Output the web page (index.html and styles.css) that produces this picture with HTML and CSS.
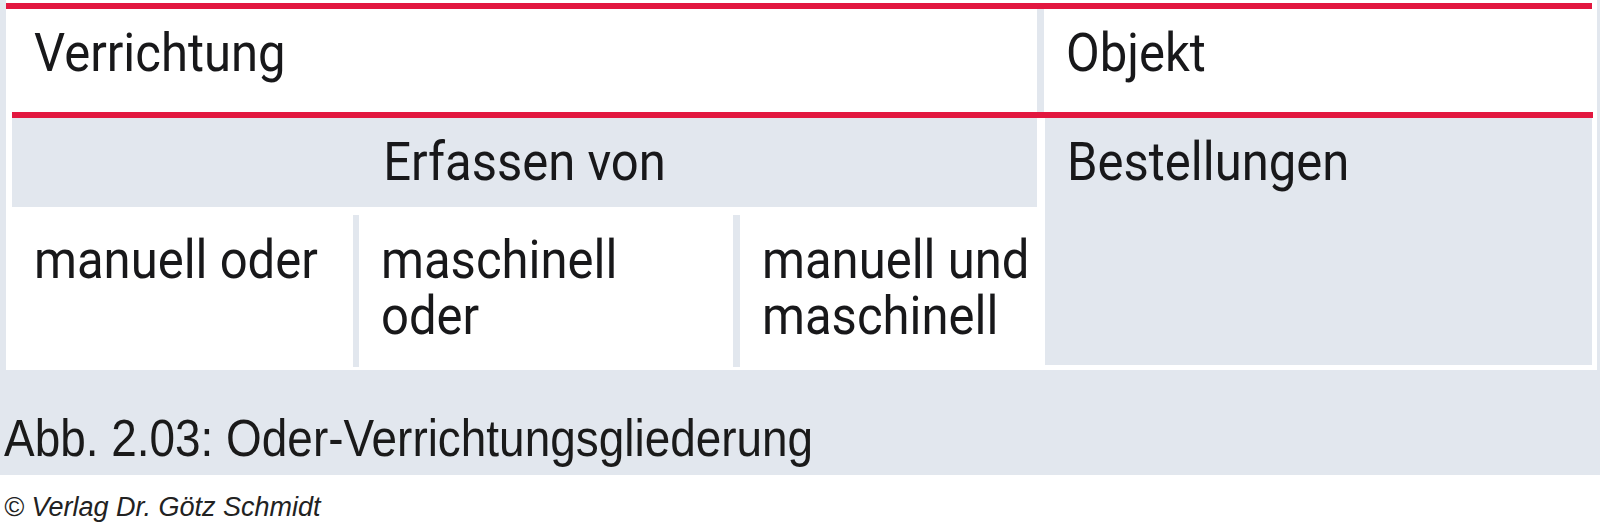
FILE: index.html
```html
<!DOCTYPE html>
<html lang="de">
<head>
<meta charset="utf-8">
<title>Abb. 2.03: Oder-Verrichtungsgliederung</title>
<link rel="stylesheet" href="styles.css">
</head>
<body>
<div class="figure">
  <div class="table">
    <div class="head">
      <div class="hcell hleft"><span class="t">Verrichtung</span></div>
      <div class="hcell hright"><span class="t">Objekt</span></div>
    </div>
    <div class="rule"></div>
    <div class="body">
      <div class="bleft">
        <div class="spancell"><span class="t">Erfassen von</span></div>
        <div class="subrow">
          <div class="sub s1"><span class="t">manuell oder</span></div>
          <div class="sub s2"><span class="t">maschinell<br>oder</span></div>
          <div class="sub s3"><span class="t">manuell und<br>maschinell</span></div>
        </div>
      </div>
      <div class="bright"><span class="t">Bestellungen</span></div>
    </div>
  </div>
  <p class="caption"><span class="cap">Abb. 2.03: Oder-Verrichtungsgliederung</span></p>
</div>
<p class="copy">© Verlag Dr. Götz Schmidt</p>
</body>
</html>
```
FILE: styles.css
```css
html, body {
  margin: 0;
  padding: 0;
  background: #ffffff;
}
body {
  font-family: Roboto, "Liberation Sans", sans-serif;
  color: #18181a;
}
.figure {
  background: #e2e7ee;
}
.table {
  background: #ffffff;
  height: 370px;
  box-sizing: border-box;
  margin: 0 3px 0 6px;
  padding-top: 3px;
  display: flex;
  flex-direction: column;
}
.t {
  display: inline-block;
  font-size: 49px;
  font-weight: 400;
  line-height: 51px;
  white-space: nowrap;
  transform: scaleY(1.1);
  transform-origin: left top;
}
.head {
  display: flex;
  gap: 7px;
  background: #e2e7ee;
  border-top: 6px solid #e2173f;
  margin-right: 5px;
  height: 103px;
}
.hcell {
  background: #ffffff;
  box-sizing: border-box;
  padding-top: 16px;
}
.hleft {
  width: 1031px;
  padding-left: 28px;
}
.hright {
  flex: 1;
  padding-left: 22px;
}
.rule {
  height: 6px;
  background: #e2173f;
  margin: 0 4px 0 6px;
}
.body {
  flex: 1;
  display: flex;
  margin-left: 6px;
}
.bleft {
  width: 1025px;
  display: flex;
  flex-direction: column;
}
.spancell {
  height: 89px;
  box-sizing: border-box;
  background: #e2e7ee;
  text-align: center;
  padding-top: 16px;
}
.subrow {
  flex: 1;
  display: flex;
  padding: 8px 0 3px;
}
.sub {
  box-sizing: border-box;
  padding-top: 17px;
  padding-left: 22px;
}
.s1 {
  width: 341px;
}
.s2 {
  width: 380px;
  border-left: 6px solid #e2e7ee;
}
.s3 {
  width: 304px;
  border-left: 7px solid #e2e7ee;
}
.bright {
  margin-left: 8px;
  width: 547px;
  height: 247px;
  box-sizing: border-box;
  background: #e2e7ee;
  padding: 16px 0 0 22px;
}
.caption {
  margin: 0;
  height: 105px;
  box-sizing: border-box;
  padding: 38px 0 0 4px;
  font-family: "Liberation Sans", Arial, sans-serif;
  font-size: 52px;
  line-height: 60px;
  color: #1a1a1a;
}
.cap {
  display: inline-block;
  white-space: nowrap;
  transform: scaleX(0.883);
  transform-origin: left top;
}
.copy {
  margin: 0;
  padding: 17px 0 0 4px;
  font-family: "Liberation Sans", Arial, sans-serif;
  font-style: italic;
  font-size: 27px;
  line-height: 30px;
  color: #222222;
}
```
